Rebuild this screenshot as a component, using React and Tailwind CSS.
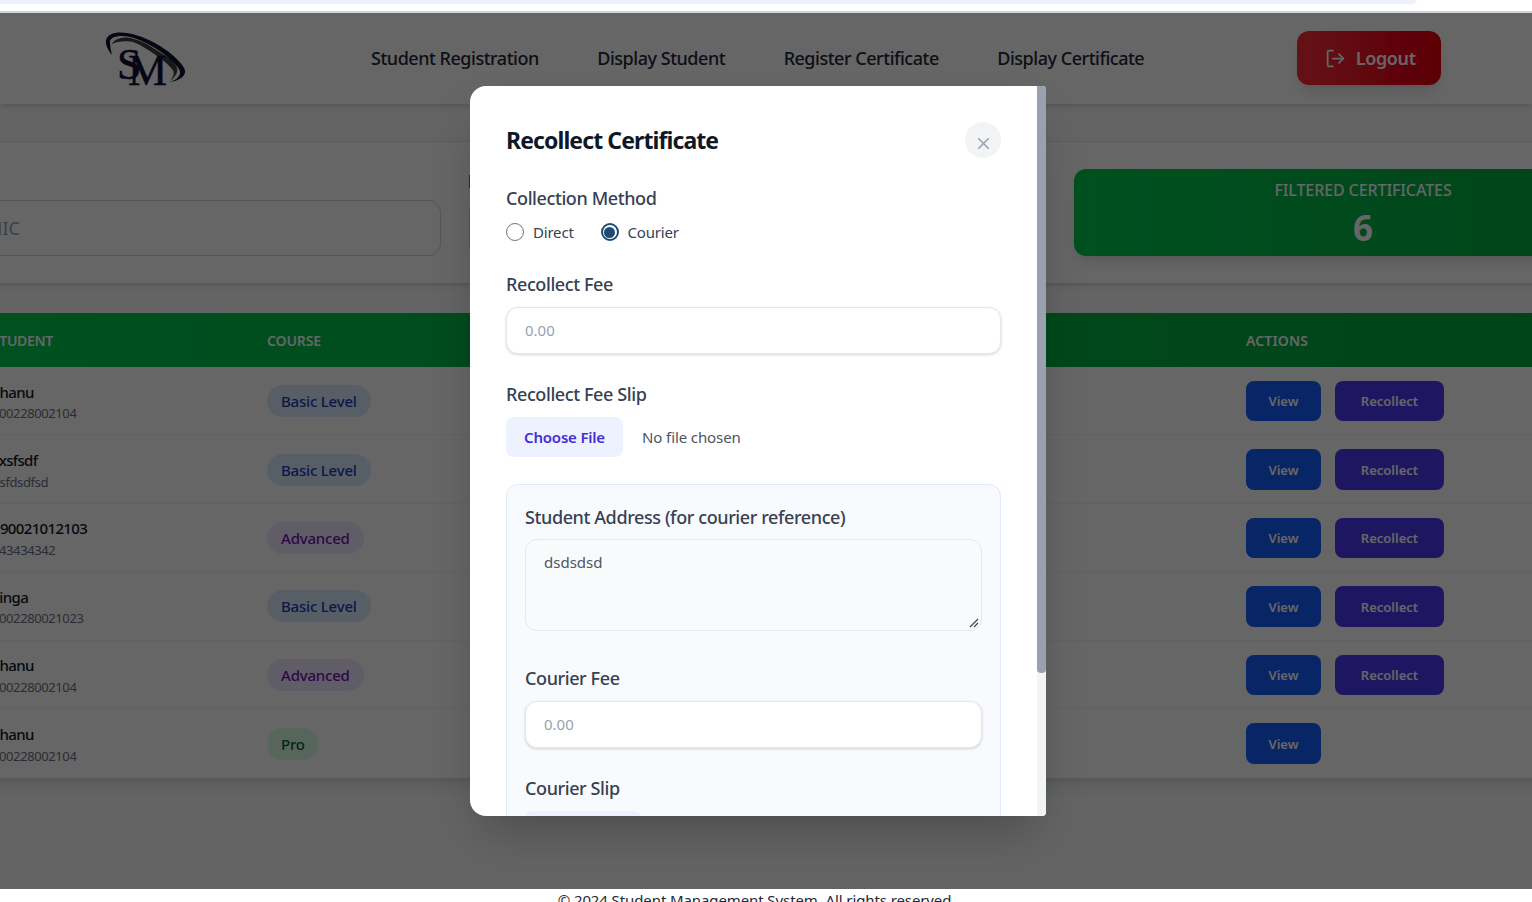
import React from "react";
import { LogOut, X } from "lucide-react";

const rows = [
  { name: "Shanu", id: "200228002104", course: "Basic Level", recollect: true },
  { name: "sxsfsdf", id: "dsfdsdfsd", course: "Basic Level", recollect: true },
  { name: "190021012103", id: "343434342", course: "Advanced", recollect: true },
  { name: "Linga", id: "2002280021023", course: "Basic Level", recollect: true },
  { name: "Shanu", id: "200228002104", course: "Advanced", recollect: true },
  { name: "Shanu", id: "200228002104", course: "Pro", recollect: false },
];

const badgeStyles = {
  "Basic Level": "bg-blue-100 text-blue-800",
  Advanced: "bg-purple-100 text-purple-800",
  Pro: "bg-green-100 text-green-800",
};

function Logo() {
  return (
    <svg width="84" height="56" viewBox="0 0 84 56">
      <path d="M7 13 C9 8 16 6.5 22 6.5 C34 8 44 14 52 19.5 C60 24 68 30 70 33 C74 38 73 44 65 50 C69 45 70 41 67 38 C63 33 58 29 52 25 C44 19 36 14 28 11 C22 9.5 12 10 7 13Z" fill="#3f3f42" />
      <path d="M1 9.5 C2 4 8 1.5 15 1.5 C26 1.5 38 6 45 9.5 C56 15 63 20 68 24.5 C74 30 79 35 80 39.5 C81 45 74 50 65 51 C71 49 74 46 75 43 C76 40 73 36 68 31 C60 23 52 18 42 12.5 C34 8 24 5 17 5 C10 5 5 7 5 11 C5 15 6 20 7 24 C3 19 0.5 14 1 9.5Z" fill="#0e0e33" />
      <text fontSize="44" fontFamily="'Liberation Serif', serif" fill="#0e0e33" stroke="#0e0e33" strokeWidth="0.5">
        <tspan x="12" y="47.5">S</tspan>
        <tspan x="23" y="53.5">M</tspan>
      </text>
    </svg>
  );
}

function Field({ label, children, className }) {
  return (
    <div className={className}>
      <p className="text-lg font-medium leading-7 text-gray-700 tracking-[-0.4px]">{label}</p>
      {children}
    </div>
  );
}

function MoneyInput() {
  return (
    <div className="mt-[9px] h-[47px] flex items-center rounded-xl border border-gray-200 bg-white px-[18px] shadow-[0_1px_3px_rgba(0,0,0,0.16)] text-gray-400 text-[15px]">
      0.00
    </div>
  );
}

function FileButton() {
  return (
    <div className="mt-[9px] h-10 w-[117px] flex items-center justify-center rounded-lg bg-indigo-50 text-indigo-700 font-semibold text-[15px] tracking-[-0.2px]">
      Choose File
    </div>
  );
}

function Modal() {
  return (
    <div className="absolute left-[470px] top-[73px] flex h-[730px] w-[576px] overflow-hidden rounded-l-2xl rounded-r-[4px] bg-white shadow-2xl">
      <div className="min-w-0 flex-1 overflow-hidden px-9 pt-9">
        <div className="flex h-9 items-center justify-between">
          <h2 className="text-[23px] font-bold text-gray-900 tracking-[-0.9px]">Recollect Certificate</h2>
          <div className="flex h-9 w-9 items-center justify-center rounded-full bg-gray-100 text-gray-400 pt-[6px]">
            <X size={19} strokeWidth={2} />
          </div>
        </div>

        <Field label="Collection Method" className="mt-[26px]">
          <div className="mt-2 flex h-6 items-center text-[15px] text-gray-700">
            <span className="h-[18px] w-[18px] rounded-full border border-gray-500" />
            <span className="ml-[9px] tracking-[-0.2px]">Direct</span>
            <span className="ml-[27px] flex h-[18px] w-[18px] items-center justify-center rounded-full border-2 border-[#1e4a74]">
              <span className="h-[11px] w-[11px] rounded-full bg-[#1e4a74]" />
            </span>
            <span className="ml-[9px] tracking-[-0.2px]">Courier</span>
          </div>
        </Field>

        <Field label="Recollect Fee" className="mt-[26px]">
          <MoneyInput />
        </Field>

        <Field label="Recollect Fee Slip" className="mt-[26px]">
          <div className="flex items-center">
            <FileButton />
            <span className="ml-[19px] mt-[9px] text-[15px] text-gray-600 tracking-[-0.1px]">No file chosen</span>
          </div>
        </Field>

        <div className="mt-[27px] rounded-xl border border-indigo-100 bg-[#f9fafe] px-[18px] pt-[18px] pb-8">
          <Field label="Student Address (for courier reference)">
            <div className="relative mt-2 h-[92px] rounded-xl border border-gray-200 bg-gray-50 px-[18px] pt-[11px] text-[15px] text-gray-600">
              dsdsdsd
              <svg className="absolute bottom-0.5 right-0.5" width="10" height="10" viewBox="0 0 10 10">
                <path d="M1 9 L9 1 M5 9 L9 5" stroke="#444" strokeWidth="1.2" />
              </svg>
            </div>
          </Field>
          <Field label="Courier Fee" className="mt-[33px]">
            <MoneyInput />
          </Field>
          <Field label="Courier Slip" className="mt-[26px]">
            <FileButton />
          </Field>
        </div>
      </div>

      <div className="w-[9px] shrink-0 bg-gray-100">
        <div className="h-[587px] rounded-b-sm bg-gray-400" />
      </div>
    </div>
  );
}

export default function App() {
  return (
    <div className="flex h-screen flex-col overflow-hidden bg-white font-['Noto_Sans',sans-serif]">
      <div className="h-[4px] w-[1416px] shrink-0 rounded-br-xl bg-[#edf2fa]" />
      <div className="h-[7px] shrink-0" />
      <div className="h-0.5 shrink-0 bg-gray-300" />

      <div className="relative min-h-0 flex-1 overflow-hidden bg-gray-50">
        <header className="flex h-[91px] items-center bg-white pb-0.5 shadow-md">
          <div className="ml-[105px] mt-0.5">
            <Logo />
          </div>
          <nav className="ml-[182px] flex gap-[58.5px] pt-px text-lg font-medium text-gray-800 tracking-[-0.48px]">
            <span>Student Registration</span>
            <span>Display Student</span>
            <span>Register Certificate</span>
            <span>Display Certificate</span>
          </nav>
          <button className="ml-[153px] flex h-[54px] w-36 items-center justify-center gap-[10px] rounded-xl bg-gradient-to-r from-red-500 to-red-600 pl-0.5 text-lg font-semibold text-white shadow-lg tracking-[-0.4px]">
            <LogOut size={21} className="mt-0.5" />
            <span className="pt-px">Logout</span>
          </button>
        </header>

        <div className="ml-[-160px] w-[1860px]">
          <section className="mt-[37px] grid h-[142px] grid-cols-[577px_577px_578px] items-start gap-7 rounded-xl border-t border-gray-200 bg-white px-6 shadow-md">
            <div className="mt-[27px]">
              <p className="h-6 text-lg font-medium leading-6 text-gray-700">Search</p>
              <div className="mt-[7px] flex h-14 items-center justify-end rounded-xl border border-gray-300 pr-[420px] text-lg text-gray-400">
                <span className="whitespace-nowrap">Search by name or NIC</span>
              </div>
            </div>
            <div className="mt-[27px]">
              <p className="ml-[-1.5px] h-6 text-lg font-medium leading-6 text-gray-700">Filter by Course</p>
              <div className="mt-[7px] h-14 rounded-xl border border-gray-300" />
            </div>
            <div className="mt-[27px] flex h-[87px] flex-col items-center rounded-xl bg-gradient-to-r from-green-500 to-green-600 pt-[9px] text-white shadow-lg">
              <p className="text-base font-medium uppercase leading-6 tracking-[-0.1px]">Filtered Certificates</p>
              <p className="mt-[6px] text-[35px] font-bold leading-10">6</p>
            </div>
          </section>

          <section className="ml-[128px] mt-[30px] overflow-hidden bg-white pb-px shadow-lg">
            <div className="flex h-[54px] items-center bg-gradient-to-r from-green-500 to-green-600 pt-0.5 text-sm font-semibold uppercase text-white">
              <span className="w-[299px] pl-6 tracking-[-0.35px]">Student</span>
              <span className="w-[979px] tracking-[-0.1px]">Course</span>
              <span className="tracking-[0.15px]">Actions</span>
            </div>
            {rows.map((row, i) => (
              <div key={i} className="flex h-[68.4px] items-center border-b border-gray-100 pt-px last:border-b-0">
                <div className="w-[299px] pl-6 pt-[4px] leading-[21.5px]">
                  <p className="text-[15px] font-medium text-gray-900 tracking-[-0.65px]">{row.name}</p>
                  <p className="text-[13px] text-gray-500 tracking-[-0.4px]">{row.id}</p>
                </div>
                <div className="w-[979px]">
                  <span className={`inline-block rounded-full px-[14px] py-1 text-[15px] font-medium leading-6 tracking-[-0.2px] ${badgeStyles[row.course]}`}>
                    {row.course}
                  </span>
                </div>
                <div className="flex gap-3.5 text-[13px] font-semibold text-white">
                  <button className="h-[40.5px] w-[75px] rounded-lg bg-blue-600 pt-0.5">View</button>
                  {row.recollect && <button className="h-[40.5px] w-[109px] rounded-lg bg-indigo-600 pt-0.5">Recollect</button>}
                </div>
              </div>
            ))}
          </section>
        </div>

        <div className="absolute inset-0 bg-black/60" />
        <Modal />
      </div>

      <footer className="flex h-[13px] shrink-0 justify-center overflow-hidden bg-white pr-[19px] pt-[1px] text-[15px] leading-5 text-gray-800 tracking-[-0.1px]">
        © 2024 Student Management System. All rights reserved.
      </footer>
    </div>
  );
}
